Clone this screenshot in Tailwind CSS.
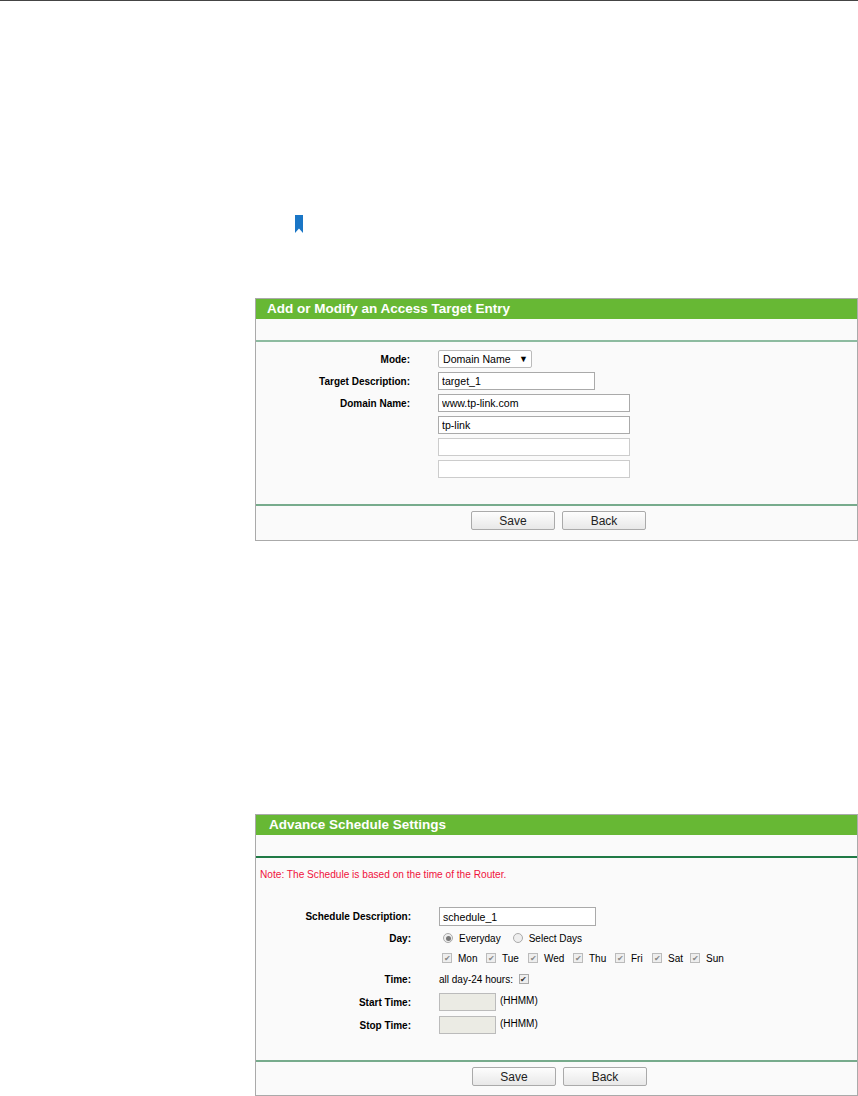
<!DOCTYPE html>
<html lang="en">
<head>
  <meta charset="UTF-8" />
  <title>Access Target and Schedule</title>
  <script src="https://cdn.jsdelivr.net/npm/@tailwindcss/browser@4"></script>
</head>
<body class="bg-white font-['Liberation_Sans',Arial,sans-serif] text-[#222] h-[1096px] w-[858px] overflow-hidden">

  <div class="h-px bg-[#444]"></div>

  <!-- Bookmark -->
  <div class="pt-[214px] pl-[295px] h-[297px]">
    <svg width="8" height="18" viewBox="0 0 8 18"><path d="M0 0H8V18L4 13.5L0 18Z" fill="#1a76c6"/></svg>
  </div>

  <!-- Access target panel -->
  <section class="ml-[255px] w-[603px] h-[243px] border border-[#aaa] bg-[#fafafa] flex flex-col">
    <h2 class="h-[20px] bg-[#67b834] text-white font-bold text-[13.5px] leading-[19px] pl-[11px]">Add or Modify an Access Target Entry</h2>
    <div class="h-[21px] border-b-2 border-[#8dbba0] box-content"></div>
    <div class="flex-1 flex flex-col pt-[8px] gap-[4px] text-[10px] text-black">
      <div class="flex items-center h-[18px]">
        <label class="w-[154px] text-right font-bold">Mode:</label>
        <div class="ml-[28px] w-[94px] h-[18px] border border-[#bbb] rounded-[2px] bg-white flex items-center justify-between pl-[4px] pr-[3px] pt-[1px] text-[10.6px]"><span>Domain Name</span><span class="text-[9px]">▼</span></div>
      </div>
      <div class="flex items-center h-[18px]">
        <label class="w-[154px] text-right font-bold">Target Description:</label>
        <input class="ml-[28px] w-[157px] h-[18px] border border-[#aaa] bg-white px-[3px] text-[10.6px]" value="target_1" />
      </div>
      <div class="flex items-center h-[18px]">
        <label class="w-[154px] text-right font-bold">Domain Name:</label>
        <input class="ml-[28px] w-[192px] h-[18px] border border-[#aaa] bg-white px-[3px] text-[10.6px]" value="www.tp-link.com" />
      </div>
      <input class="ml-[182px] w-[192px] h-[18px] border border-[#aaa] bg-white px-[3px] text-[10.6px]" value="tp-link" />
      <input class="ml-[182px] w-[192px] h-[18px] border border-[#ccc] bg-white px-[3px] text-[10.6px]" />
      <input class="ml-[182px] w-[192px] h-[18px] border border-[#ccc] bg-white px-[3px] text-[10.6px]" />
    </div>
    <div class="h-[36px] border-t-2 border-[#77ab8c] flex pt-[5px] pl-[215px] gap-[7px]">
      <button class="w-[84px] h-[19px] border border-[#aaa] rounded-[2px] bg-gradient-to-b from-[#fdfdfd] to-[#e8e8e8] text-[12px] leading-none">Save</button>
      <button class="w-[84px] h-[19px] border border-[#aaa] rounded-[2px] bg-gradient-to-b from-[#fdfdfd] to-[#e8e8e8] text-[12px] leading-none">Back</button>
    </div>
  </section>

  <div class="h-[273px]"></div>

  <!-- Schedule panel -->
  <section class="ml-[255px] w-[603px] h-[282px] border border-[#aaa] bg-[#fafafa] flex flex-col">
    <h2 class="h-[20px] bg-[#67b834] text-white font-bold text-[13.5px] leading-[20px] pl-[13px]">Advance Schedule Settings</h2>
    <div class="h-[21px] border-b-2 border-[#1f7a45] box-content"></div>
    <p class="text-[10.15px] text-[#f0123c] pl-[4px] pt-[10px] leading-[14px]">Note: The Schedule is based on the time of the Router.</p>
    <div class="flex-1 flex flex-col pt-[25px] text-[10px] text-black">
      <div class="flex items-center h-[19px]">
        <label class="w-[155px] text-right font-bold">Schedule Description:</label>
        <input class="ml-[28px] w-[157px] h-[19px] border border-[#aaa] bg-white px-[3px] text-[10.6px]" value="schedule_1" />
      </div>
      <div class="flex items-center h-[14px] mt-[5px]">
        <label class="w-[155px] text-right font-bold">Day:</label>
        <div class="ml-[32px] flex items-center">
          <span class="w-[10px] h-[10px] rounded-full border border-[#aaa] bg-[#eee] flex items-center justify-center"><span class="w-[5px] h-[5px] rounded-full bg-[#777]"></span></span>
          <span class="ml-[6px]">Everyday</span>
          <span class="ml-[12px] w-[10px] h-[10px] rounded-full border border-[#aaa] bg-[#eee]"></span>
          <span class="ml-[6px]">Select Days</span>
        </div>
      </div>
      <div class="flex items-center h-[14px] mt-[6px] ml-[186px] gap-[6px]">
        <span class="flex items-center gap-[6px] w-[38px]"><span class="w-[10px] h-[10px] border border-[#bbb] bg-[#eee] text-[#888] text-[8px] leading-[9px] text-center">✔</span>Mon</span>
        <span class="flex items-center gap-[6px] w-[36px]"><span class="w-[10px] h-[10px] border border-[#bbb] bg-[#eee] text-[#888] text-[8px] leading-[9px] text-center">✔</span>Tue</span>
        <span class="flex items-center gap-[6px] w-[39px]"><span class="w-[10px] h-[10px] border border-[#bbb] bg-[#eee] text-[#888] text-[8px] leading-[9px] text-center">✔</span>Wed</span>
        <span class="flex items-center gap-[6px] w-[36px]"><span class="w-[10px] h-[10px] border border-[#bbb] bg-[#eee] text-[#888] text-[8px] leading-[9px] text-center">✔</span>Thu</span>
        <span class="flex items-center gap-[6px] w-[31px]"><span class="w-[10px] h-[10px] border border-[#bbb] bg-[#eee] text-[#888] text-[8px] leading-[9px] text-center">✔</span>Fri</span>
        <span class="flex items-center gap-[6px] w-[32px]"><span class="w-[10px] h-[10px] border border-[#bbb] bg-[#eee] text-[#888] text-[8px] leading-[9px] text-center">✔</span>Sat</span>
        <span class="flex items-center gap-[6px] w-[36px]"><span class="w-[10px] h-[10px] border border-[#bbb] bg-[#eee] text-[#888] text-[8px] leading-[9px] text-center">✔</span>Sun</span>
      </div>
      <div class="flex items-center h-[14px] mt-[7px]">
        <label class="w-[155px] text-right font-bold">Time:</label>
        <span class="ml-[28px]">all day-24 hours:</span>
        <span class="ml-[6px] w-[10px] h-[10px] border border-[#aaa] bg-[#eee] text-[#333] text-[8px] leading-[9px] text-center">✔</span>
      </div>
      <div class="flex items-center h-[18px] mt-[7px]">
        <label class="w-[155px] text-right font-bold">Start Time:</label>
        <input disabled class="ml-[28px] w-[57px] h-[18px] border border-[#bbb] bg-[#ebebe4]" />
        <span class="ml-[4px] -mt-[4px]">(HHMM)</span>
      </div>
      <div class="flex items-center h-[18px] mt-[5px]">
        <label class="w-[155px] text-right font-bold">Stop Time:</label>
        <input disabled class="ml-[28px] w-[57px] h-[18px] border border-[#bbb] bg-[#ebebe4]" />
        <span class="ml-[4px] -mt-[4px]">(HHMM)</span>
      </div>
    </div>
    <div class="h-[35px] border-t-2 border-[#77ab8c] flex pt-[5px] pl-[216px] gap-[7px]">
      <button class="w-[84px] h-[19px] border border-[#aaa] rounded-[2px] bg-gradient-to-b from-[#fdfdfd] to-[#e8e8e8] text-[12px] leading-none">Save</button>
      <button class="w-[84px] h-[19px] border border-[#aaa] rounded-[2px] bg-gradient-to-b from-[#fdfdfd] to-[#e8e8e8] text-[12px] leading-none">Back</button>
    </div>
  </section>

</body>
</html>
